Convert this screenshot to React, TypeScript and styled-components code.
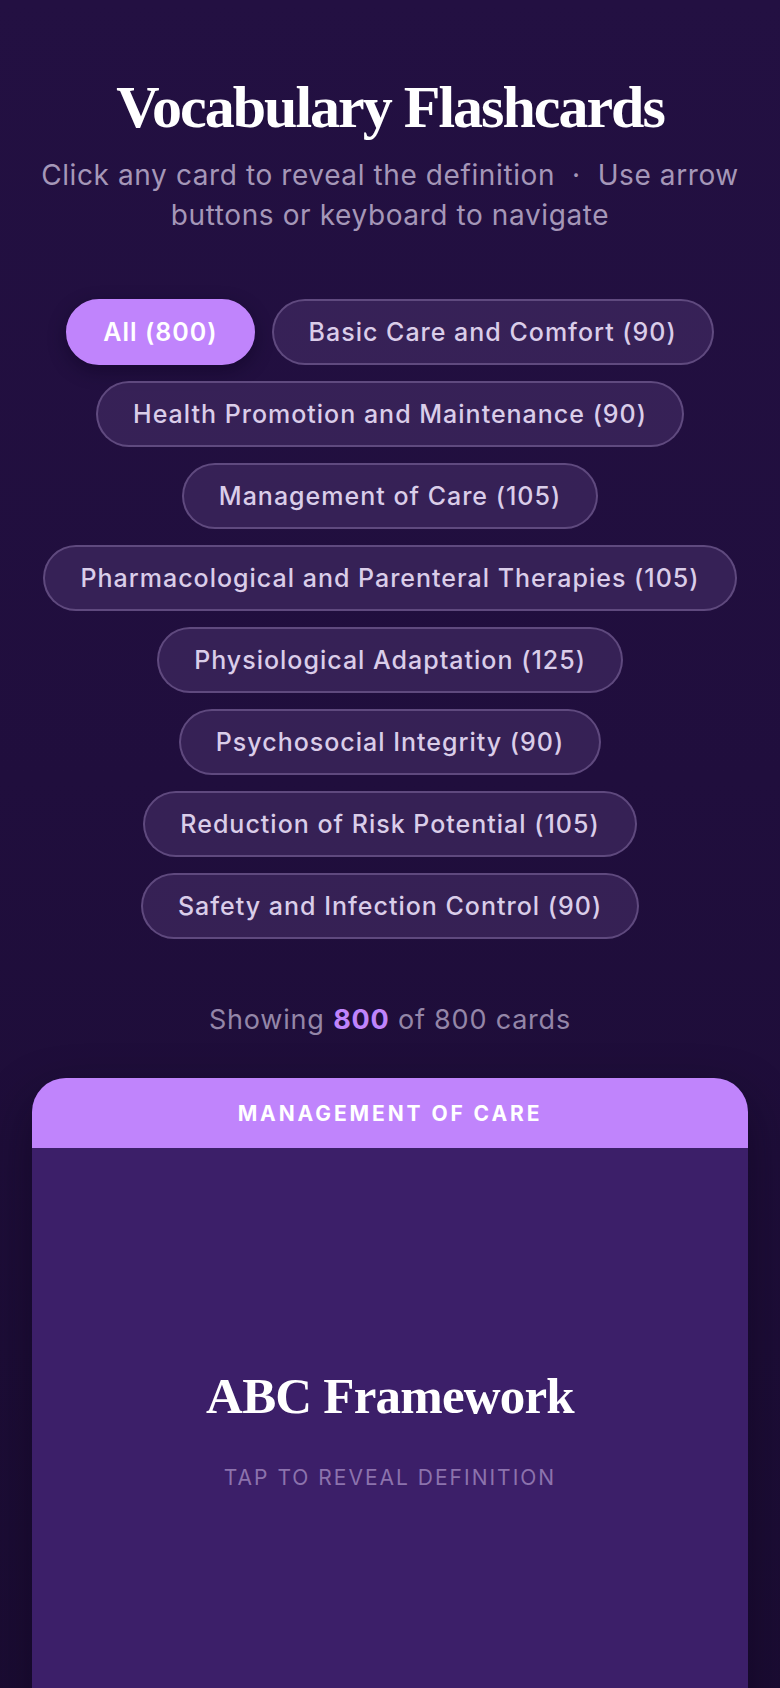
import React from "react";
import styled, {createGlobalStyle} from "styled-components";

const GlobalStyle = createGlobalStyle`
    html, body {
        margin: 0;
        padding: 0;
        background: #1e0e38;
    }

    * {
        box-sizing: border-box;
    }
`

const Page = styled.div`
    min-height: 100vh;
    padding: 71px 32px 0;
    overflow: hidden;
    background: linear-gradient(180deg, #231042 0%, #200e3d 45%, #1b0c33 100%);
    font-family: "Inter", "Lato", sans-serif;
    display: flex;
    flex-direction: column;
    align-items: center;
`

const Title = styled.h1`
    margin: 0;
    font-family: "Liberation Serif", "DejaVu Serif", serif;
    font-weight: 700;
    font-size: 60px;
    letter-spacing: -2px;
    line-height: 1.2;
    color: #ffffff;
    text-align: center;
`

const Subtitle = styled.p`
    margin: 12px 0 0;
    max-width: 704px;
    font-size: 28px;
    line-height: 40px;
    letter-spacing: 0.6px;
    font-weight: 400;
    color: #a597b8;
    text-align: center;
`

const ChipList = styled.div`
    margin-top: 64px;
    display: flex;
    flex-wrap: wrap;
    justify-content: center;
    gap: 16px 17px;
    max-width: 716px;
`

const Chip = styled.button<{ $active?: boolean }>`
    height: 66px;
    padding: 0 35px;
    border-radius: 999px;
    font-family: "Inter", "Lato", sans-serif;
    font-size: 25px;
    letter-spacing: 1px;
    font-weight: ${p => p.$active ? 600 : 500};
    color: ${p => p.$active ? "#ffffff" : "#dacde9"};
    background: ${p => p.$active ? "#c084fc" : "rgba(72, 50, 106, 0.55)"};
    border: 2px solid ${p => p.$active ? "#c084fc" : "rgba(130, 108, 160, 0.55)"};
    box-shadow: ${p => p.$active ? "0 6px 18px rgba(10, 0, 30, 0.45)" : "none"};
    cursor: pointer;
    white-space: nowrap;
`

const Count = styled.div`
    margin-top: 64px;
    font-size: 27px;
    color: #9486a8;
    letter-spacing: 0.8px;

    strong {
        color: #c084fc;
        font-weight: 700;
    }
`

const Card = styled.div`
    margin-top: 42px;
    width: 100%;
    border-radius: 34px;
    overflow: hidden;
    background: #3c1f69;
    box-shadow: 0 20px 50px rgba(8, 0, 20, 0.45);
    cursor: pointer;
`

const CardHeader = styled.div`
    height: 70px;
    display: flex;
    align-items: center;
    justify-content: center;
    background: #c084fc;
    color: #ffffff;
    font-size: 21px;
    font-weight: 700;
    letter-spacing: 2.9px;
    text-transform: uppercase;
`

const CardBody = styled.div`
    min-height: 580px;
    display: flex;
    flex-direction: column;
    align-items: center;
    justify-content: center;
    gap: 40px;
    padding-bottom: 20px;
`

const Term = styled.h2`
    margin: 0;
    font-family: "Liberation Serif", "DejaVu Serif", serif;
    font-weight: 700;
    font-size: 51px;
    letter-spacing: -0.8px;
    color: #ffffff;
`

const Hint = styled.div`
    font-size: 21px;
    letter-spacing: 2px;
    color: #8c73ad;
    text-transform: uppercase;
`

const categories = [
    {name: "All", count: 800},
    {name: "Basic Care and Comfort", count: 90},
    {name: "Health Promotion and Maintenance", count: 90},
    {name: "Management of Care", count: 105},
    {name: "Pharmacological and Parenteral Therapies", count: 105},
    {name: "Physiological Adaptation", count: 125},
    {name: "Psychosocial Integrity", count: 90},
    {name: "Reduction of Risk Potential", count: 105},
    {name: "Safety and Infection Control", count: 90},
]

function App() {
    const [active, setActive] = React.useState("All")

    return (
        <Page>
            <GlobalStyle/>
            <Title>Vocabulary Flashcards</Title>
            <Subtitle>
                Click any card to reveal the definition &nbsp;·&nbsp; Use arrow buttons or keyboard to navigate
            </Subtitle>
            <ChipList>
                {categories.map(c => (
                    <Chip key={c.name} $active={active === c.name} onClick={() => setActive(c.name)}>
                        {c.name} ({c.count})
                    </Chip>
                ))}
            </ChipList>
            <Count>
                Showing <strong>800</strong> of 800 cards
            </Count>
            <Card>
                <CardHeader>Management of Care</CardHeader>
                <CardBody>
                    <Term>ABC Framework</Term>
                    <Hint>Tap to reveal definition</Hint>
                </CardBody>
            </Card>
        </Page>
    )
}

export default App
